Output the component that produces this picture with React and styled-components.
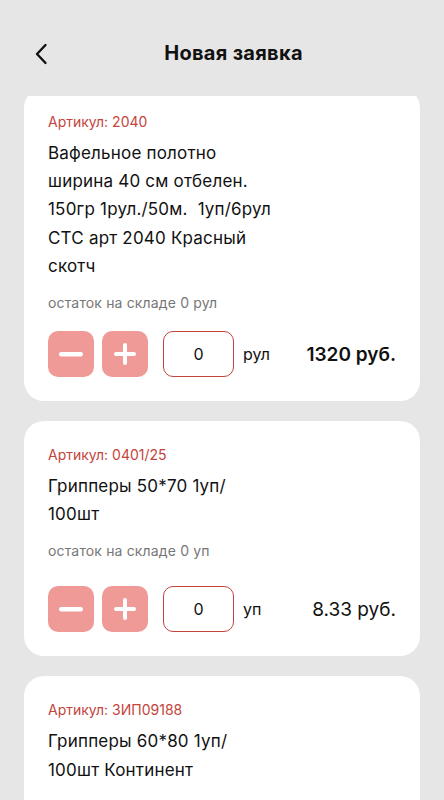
import styled, { createGlobalStyle } from "styled-components";

const GlobalStyle = createGlobalStyle`
  body {
    margin: 0;
    background: #e6e6e6;
    font-family: Inter, "Noto Sans", sans-serif;
    color: #111;
  }
`;

const items = [
  {
    sku: "2040",
    name: "Вафельное полотно\nширина 40 см отбелен.\n150гр 1рул./50м.  1уп/6рул\nСТС арт 2040 Красный\nскотч",
    stock: "остаток на складе 0 рул",
    unit: "рул",
    price: "1320 руб.",
    bold: true,
    rowGap: 19,
  },
  {
    sku: "0401/25",
    name: "Грипперы 50*70 1уп/\n100шт",
    stock: "остаток на складе 0 уп",
    unit: "уп",
    price: "8.33 руб.",
    bold: false,
    rowGap: 26,
  },
  {
    sku: "ЗИП09188",
    name: "Грипперы 60*80 1уп/\n100шт Континент",
    stock: "остаток на складе 0 уп",
    unit: "уп",
    price: "8.33 руб.",
    bold: false,
    rowGap: 26,
  },
];

const App = () => {
  return (
    <Screen>
      <GlobalStyle />
      <Header>
        <BackButton aria-label="back">
          <svg width="14" height="22" viewBox="0 0 14 22" fill="none">
            <path
              d="M11.5 2L3 11l8.5 9"
              stroke="#111"
              strokeWidth="2.4"
              strokeLinecap="round"
              strokeLinejoin="round"
            />
          </svg>
        </BackButton>
        <Title>Новая заявка</Title>
      </Header>
      <List>
        <Scroller>
          {items.map((item) => (
            <Card key={item.sku}>
              <Sku>Артикул: {item.sku}</Sku>
              <Name>{item.name}</Name>
              <Stock>{item.stock}</Stock>
              <Controls $gap={item.rowGap}>
                <StepButton aria-label="minus">
                  <svg width="24" height="24" viewBox="0 0 24 24">
                    <rect x="0" y="10" width="24" height="4.5" rx="2.2" fill="#fff" />
                  </svg>
                </StepButton>
                <StepButton aria-label="plus">
                  <svg width="24" height="24" viewBox="0 0 24 24">
                    <rect x="1" y="10" width="22" height="4" rx="2" fill="#fff" />
                    <rect x="10" y="1" width="4" height="22" rx="2" fill="#fff" />
                  </svg>
                </StepButton>
                <QtyBox>0</QtyBox>
                <Unit>{item.unit}</Unit>
                <Price $bold={item.bold}>{item.price}</Price>
              </Controls>
            </Card>
          ))}
        </Scroller>
      </List>
    </Screen>
  );
};

export default App;

const Screen = styled.div`
  height: 800px;
  display: flex;
  flex-direction: column;
  overflow: hidden;
`;

const Header = styled.div`
  height: 96px;
  box-sizing: border-box;
  padding: 10px 0 0 23px;
  display: flex;
  align-items: center;
  justify-content: center;
  position: relative;
  flex-shrink: 0;
`;

const BackButton = styled.button`
  position: absolute;
  left: 34px;
  top: 43px;
  width: 16px;
  height: 22px;
  padding: 0;
  border: none;
  background: none;
  display: flex;
`;

const Title = styled.h1`
  margin: 0;
  font-size: 20px;
  font-weight: 700;
  letter-spacing: 0.3px;
  color: #111;
`;

const List = styled.div`
  flex: 1;
  overflow: hidden;
  padding: 0 24px;
`;

const Scroller = styled.div`
  margin-top: -8px;
  display: flex;
  flex-direction: column;
  gap: 20px;
`;

const Card = styled.div`
  background: #fff;
  border-radius: 20px;
  padding: 24px;
  display: flex;
  flex-direction: column;
`;

const Sku = styled.div`
  font-size: 14px;
  line-height: 20px;
  color: #c4443d;
`;

const Name = styled.div`
  margin-top: 7px;
  font-size: 17px;
  line-height: 28.2px;
  letter-spacing: 0.2px;
  white-space: pre-wrap;
  color: #111;
`;

const Stock = styled.div`
  margin-top: 14px;
  font-size: 14px;
  line-height: 18px;
  letter-spacing: 0.15px;
  color: #777;
`;

const Controls = styled.div`
  margin-top: ${(p) => p.$gap}px;
  display: flex;
  align-items: center;
  height: 46px;
`;

const StepButton = styled.button`
  width: 46px;
  height: 46px;
  border: none;
  border-radius: 10px;
  background: #ef9a96;
  padding: 0;
  display: flex;
  align-items: center;
  justify-content: center;
  & + & {
    margin-left: 8px;
  }
`;

const QtyBox = styled.div`
  margin-left: 15px;
  width: 71px;
  height: 46px;
  box-sizing: border-box;
  border: 1px solid #c4443d;
  border-radius: 10px;
  display: flex;
  align-items: center;
  justify-content: center;
  font-size: 16px;
  color: #111;
`;

const Unit = styled.span`
  margin-left: 9px;
  font-size: 16px;
  color: #111;
`;

const Price = styled.span`
  margin-left: auto;
  font-size: 19px;
  font-weight: ${(p) => (p.$bold ? 600 : 400)};
  color: #111;
`;
